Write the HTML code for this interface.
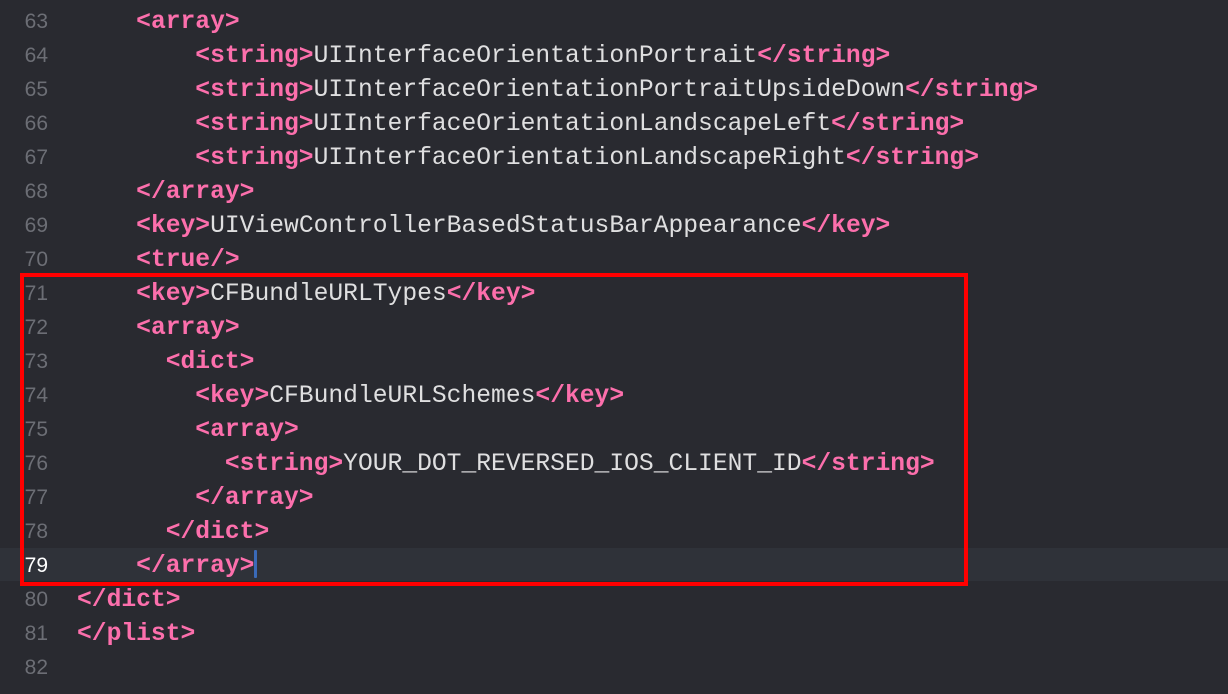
<!DOCTYPE html>
<html><head><style>
html,body{margin:0;padding:0;width:1228px;height:694px;overflow:hidden;background:#292a30;}
.wrap{position:absolute;left:0;top:-29px;width:1228px;}
.row{position:relative;height:34px;line-height:34px;white-space:pre;}
.num{position:absolute;left:0;width:48px;text-align:right;font-family:"Liberation Sans",sans-serif;font-size:21px;color:#6c6e75;}
.code{position:absolute;left:77px;font-family:"Liberation Mono",monospace;font-size:24.65px;color:#dfdfe0;}
.t{color:#fc6fac;font-weight:bold;}
.cur .num{color:#fff;}
.hl{position:absolute;left:0;top:548px;width:1228px;height:33px;background:#2f3239;}
.box{position:absolute;left:20px;top:273px;width:940px;height:305px;border:4px solid #ff0000;}
.caret{position:absolute;left:254px;top:550px;width:3px;height:28px;background:#3a6ab8;border-radius:1px;}
</style></head><body>
<div class="hl"></div>
<div class="wrap">
<div class="row"><span class="num">62</span><span class="code">    <span class="t">&lt;key&gt;</span>UISupportedInterfaceOrientations<span class="t">&lt;/key&gt;</span></span></div>
<div class="row"><span class="num">63</span><span class="code">    <span class="t">&lt;array&gt;</span></span></div>
<div class="row"><span class="num">64</span><span class="code">        <span class="t">&lt;string&gt;</span>UIInterfaceOrientationPortrait<span class="t">&lt;/string&gt;</span></span></div>
<div class="row"><span class="num">65</span><span class="code">        <span class="t">&lt;string&gt;</span>UIInterfaceOrientationPortraitUpsideDown<span class="t">&lt;/string&gt;</span></span></div>
<div class="row"><span class="num">66</span><span class="code">        <span class="t">&lt;string&gt;</span>UIInterfaceOrientationLandscapeLeft<span class="t">&lt;/string&gt;</span></span></div>
<div class="row"><span class="num">67</span><span class="code">        <span class="t">&lt;string&gt;</span>UIInterfaceOrientationLandscapeRight<span class="t">&lt;/string&gt;</span></span></div>
<div class="row"><span class="num">68</span><span class="code">    <span class="t">&lt;/array&gt;</span></span></div>
<div class="row"><span class="num">69</span><span class="code">    <span class="t">&lt;key&gt;</span>UIViewControllerBasedStatusBarAppearance<span class="t">&lt;/key&gt;</span></span></div>
<div class="row"><span class="num">70</span><span class="code">    <span class="t">&lt;true/&gt;</span></span></div>
<div class="row"><span class="num">71</span><span class="code">    <span class="t">&lt;key&gt;</span>CFBundleURLTypes<span class="t">&lt;/key&gt;</span></span></div>
<div class="row"><span class="num">72</span><span class="code">    <span class="t">&lt;array&gt;</span></span></div>
<div class="row"><span class="num">73</span><span class="code">      <span class="t">&lt;dict&gt;</span></span></div>
<div class="row"><span class="num">74</span><span class="code">        <span class="t">&lt;key&gt;</span>CFBundleURLSchemes<span class="t">&lt;/key&gt;</span></span></div>
<div class="row"><span class="num">75</span><span class="code">        <span class="t">&lt;array&gt;</span></span></div>
<div class="row"><span class="num">76</span><span class="code">          <span class="t">&lt;string&gt;</span>YOUR_DOT_REVERSED_IOS_CLIENT_ID<span class="t">&lt;/string&gt;</span></span></div>
<div class="row"><span class="num">77</span><span class="code">        <span class="t">&lt;/array&gt;</span></span></div>
<div class="row"><span class="num">78</span><span class="code">      <span class="t">&lt;/dict&gt;</span></span></div>
<div class="row cur"><span class="num">79</span><span class="code">    <span class="t">&lt;/array&gt;</span></span></div>
<div class="row"><span class="num">80</span><span class="code"><span class="t">&lt;/dict&gt;</span></span></div>
<div class="row"><span class="num">81</span><span class="code"><span class="t">&lt;/plist&gt;</span></span></div>
<div class="row"><span class="num">82</span><span class="code"></span></div>
</div>
<div class="caret"></div>
<div class="box"></div>
</body></html>
